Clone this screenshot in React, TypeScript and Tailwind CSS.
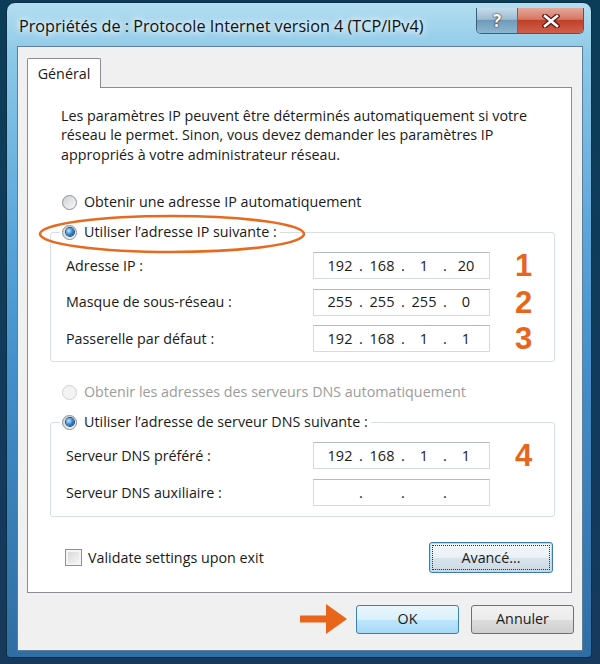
import React from "react";

function Radio({ checked, disabled }: { checked?: boolean; disabled?: boolean }) {
  return (
    <span
      className={`flex h-[15px] w-[15px] shrink-0 items-center justify-center rounded-full border ${
        disabled
          ? "border-[#cfd1d4] bg-[#f3f3f3]"
          : "border-[#8a8e94] bg-[linear-gradient(135deg,#cfd1d4,#f8f8f8)]"
      }`}
    >
      {checked && (
        <span className="h-[8px] w-[8px] rounded-full bg-[radial-gradient(circle_at_35%_35%,#bfe8ff,#2c7cc6_55%,#0d3b70)] shadow-[0_0_0_1px_#1b4a7e]" />
      )}
    </span>
  );
}

function IpField({ parts }: { parts: string[] }) {
  return (
    <div className="flex h-[27px] w-[177px] items-center border border-[#d6dbe1] border-t-[#b5b9c0] bg-white pl-[9px] text-[14.5px] text-[#1a1a1a]">
      {parts.map((p, i) => (
        <React.Fragment key={i}>
          {i > 0 && <span className="w-[8px] text-center">.</span>}
          <span className="w-[34px] text-center">{p}</span>
        </React.Fragment>
      ))}
    </div>
  );
}

function Row({ label, parts, num }: { label: string; parts: string[]; num?: string }) {
  return (
    <div className="flex h-[27px] items-center">
      <span className="w-[247px]">{label}</span>
      <IpField parts={parts} />
      {num && (
        <span className="ml-[25px] h-[27px] font-['Liberation_Sans',Arial,sans-serif] text-[31px] font-bold leading-[27px] text-[#e8651c]">
          {num}
        </span>
      )}
    </div>
  );
}

export default function App() {
  return (
    <div className="h-[664px] w-[600px] overflow-hidden bg-[linear-gradient(180deg,#0b3d58,#17395c)] pl-[6px] pt-[2px] font-['Open_Sans','Noto_Sans',sans-serif] text-[14.3px] text-[#1a1a1a]">
      <div className="flex h-[656px] w-[586px] flex-col rounded-t-[9px] rounded-b-[4px] border border-[#0c2e46] bg-[linear-gradient(180deg,#b3def1_0%,#8cc8e7_8%,#5aa6da_35%,#4390cc_55%,#2f6ea4_100%)]">
        {/* title bar */}
        <div className="flex h-[43px] shrink-0 items-start justify-between pl-[12px] pr-[7px]">
          <span className="mt-[13px] text-[16.2px] leading-[20px] text-[#111] [text-shadow:0_0_6px_#fff,0_0_10px_#fff]">
            Propriétés de : Protocole Internet version 4 (TCP/IPv4)
          </span>
          <div className="mt-[5px] flex h-[26px] overflow-hidden rounded-b-[5px] border border-t-0 border-[#3a5f7c]">
            <div className="flex w-[41px] items-center justify-center border-r border-[#4d6f88] bg-[linear-gradient(180deg,#c6dcea_0%,#9dbdd3_45%,#6f9ab8_50%,#8fb6d0_100%)]">
              <span className="text-[17px] font-bold leading-none text-white [text-shadow:0_0_1px_#223,0_0_2px_#223]">?</span>
            </div>
            <div className="flex w-[65px] items-center justify-center bg-[linear-gradient(180deg,#e4a89a_0%,#d67864_45%,#c0402a_50%,#d0604a_100%)]">
              <svg width="18" height="14" viewBox="0 0 18 14">
                <path d="M3 2 L15 12 M15 2 L3 12" stroke="#5a1810" strokeWidth="5" strokeLinecap="square" />
                <path d="M3 2 L15 12 M15 2 L3 12" stroke="#fff" strokeWidth="2.6" strokeLinecap="square" />
              </svg>
            </div>
          </div>
        </div>

        {/* client area */}
        <div className="ml-[10px] flex h-[605px] w-[566px] flex-col border border-[#5f7d96] bg-[#f0f0f0]">
          <div className="ml-[9px] mt-[11px] flex">
            <div className="relative z-10 -mb-px flex h-[30px] w-[74px] items-center justify-center rounded-t-[2px] border border-b-0 border-[#898c95] bg-white">
              Général
            </div>
          </div>

          <div className="relative ml-[9px] w-[545px] border border-[#898c95] bg-white pb-[19px]">
            <p className="ml-[33px] mt-[17.5px] whitespace-nowrap leading-[19.5px]">
              Les paramètres IP peuvent être déterminés automatiquement si votre
              <br />
              réseau le permet. Sinon, vous devez demander les paramètres IP
              <br />
              appropriés à votre administrateur réseau.
            </p>

            <div className="ml-[34px] mt-[28px] flex h-[20px] items-center gap-[7px]">
              <Radio />
              <span>Obtenir une adresse IP automatiquement</span>
            </div>

            <fieldset className="ml-[22px] mt-[10px] w-[505px] rounded-[3px] border border-[#d5dfe5] px-[9px] pb-[9px]">
              <legend className="pl-[2px] pr-[3px]">
                <span className="flex h-[20px] items-center gap-[7px]">
                  <Radio checked />
                  <span>Utiliser l’adresse IP suivante :</span>
                </span>
              </legend>
              <div className="mt-[10px] flex flex-col gap-[9.5px] pl-[6px]">
                <Row label="Adresse IP :" parts={["192", "168", "1", "20"]} num="1" />
                <Row label="Masque de sous-réseau :" parts={["255", "255", "255", "0"]} num="2" />
                <Row label="Passerelle par défaut :" parts={["192", "168", "1", "1"]} num="3" />
              </div>
            </fieldset>

            <div className="ml-[34px] mt-[20px] flex h-[20px] items-center gap-[7px] text-[#9c9c9c]">
              <Radio disabled />
              <span>Obtenir les adresses des serveurs DNS automatiquement</span>
            </div>

            <fieldset className="ml-[22px] mt-[10px] w-[505px] rounded-[3px] border border-[#d5dfe5] px-[9px] pb-[10px]">
              <legend className="pl-[2px] pr-[3px]">
                <span className="flex h-[20px] items-center gap-[7px]">
                  <Radio checked />
                  <span>Utiliser l’adresse de serveur DNS suivante :</span>
                </span>
              </legend>
              <div className="mt-[10px] flex flex-col gap-[10px] pl-[6px]">
                <Row label="Serveur DNS préféré :" parts={["192", "168", "1", "1"]} num="4" />
                <Row label="Serveur DNS auxiliaire :" parts={["", "", "", ""]} />
              </div>
            </fieldset>

            <div className="mt-[25px] flex items-center justify-between pl-[37px] pr-[18px]">
              <div className="flex items-center gap-[6px]">
                <span className="h-[17px] w-[17px] border border-[#8f8f8f] bg-[linear-gradient(135deg,#d6d6d6,#f7f7f7)] shadow-[inset_0_0_0_2px_#f4f4f4]" />
                <span>Validate settings upon exit</span>
              </div>
              <button className="flex h-[31px] w-[124px] items-center justify-center rounded-[3px] border border-[#3b7bb0] bg-[linear-gradient(180deg,#f4f8fb_0%,#e9f0f5_50%,#d9e4ec_51%,#cbd9e4_100%)] shadow-[inset_0_0_0_1px_#a8e0f7]">
                <span className="flex h-[23px] w-[116px] items-center justify-center outline outline-1 outline-dotted outline-[#333]">
                  Avancé...
                </span>
              </button>
            </div>

            {/* annotation circle */}
            <svg
              className="pointer-events-none absolute left-[10px] top-[126px]"
              width="270"
              height="41"
              viewBox="0 0 270 41"
            >
              <ellipse cx="134" cy="20" rx="132" ry="18" fill="none" stroke="#e66a1f" strokeWidth="2.6" />
            </svg>
          </div>

          <div className="mt-[11px] flex items-center justify-end pr-[8px]">
            <svg width="48" height="30" viewBox="0 0 48 30" className="mr-[8px]">
              <rect x="0" y="11.5" width="28" height="7" fill="#e8651c" />
              <polygon points="26,0 47,15 26,30" fill="#e8651c" />
            </svg>
            <button className="h-[29px] w-[103px] rounded-[3px] border border-[#3c7fb1] bg-[linear-gradient(180deg,#eaf6fd_0%,#d9f0fc_50%,#bee6fd_51%,#a7d9f5_100%)]">
              OK
            </button>
            <button className="ml-[12px] h-[29px] w-[103px] rounded-[3px] border border-[#707070] bg-[linear-gradient(180deg,#f2f2f2_0%,#ebebeb_50%,#dddddd_51%,#cfcfcf_100%)]">
              Annuler
            </button>
          </div>
        </div>
      </div>
    </div>
  );
}
